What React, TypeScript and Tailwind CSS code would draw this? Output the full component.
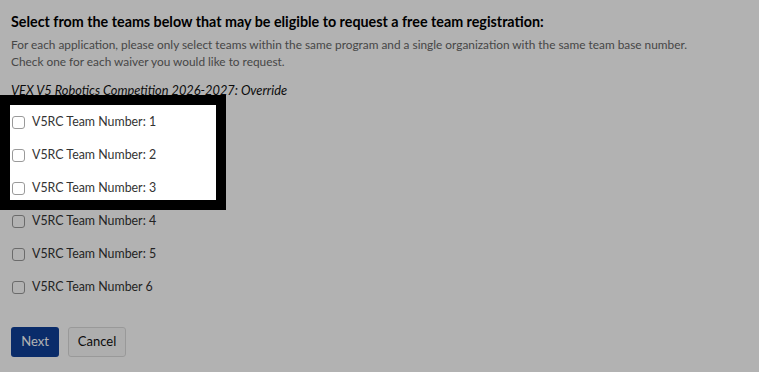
import React from "react";

const teams = [
  "V5RC Team Number: 1",
  "V5RC Team Number: 2",
  "V5RC Team Number: 3",
  "V5RC Team Number: 4",
  "V5RC Team Number: 5",
  "V5RC Team Number 6",
];

export default function App() {
  return (
    <div
      className="relative min-h-[372px] bg-white px-[11px] pt-[12px]"
      style={{ fontFamily: "Lato, 'Noto Sans', sans-serif" }}
    >
      <h2 className="text-[14.3px] font-bold leading-[20px] text-black">
        Select from the teams below that may be eligible to request a free team registration:
      </h2>
      <p className="mt-[4px] text-[11.85px] leading-[17px] text-[#666]">
        For each application, please only select teams within the same program and a single organization with the same team base number.
        <br />
        Check one for each waiver you would like to request.
      </p>
      <p className="mt-[11px] text-[12.8px] italic leading-[18px] text-[#111]">
        VEX V5 Robotics Competition 2026-2027: Override
      </p>

      <div className="mt-[7px] flex flex-col">
        {teams.map((t) => (
          <label key={t} className="flex h-[33px] items-center gap-[7px] text-[12.4px] text-[#333]">
            <span className="ml-[1px] h-[13px] w-[13px] rounded-[3px] border border-[#9a9a9a] bg-white" />
            {t}
          </label>
        ))}
      </div>

      <div className="mt-[23px] flex gap-[9px]">
        <button className="h-[30px] w-[48px] rounded-[3px] bg-[#0f3f99] text-[13px] text-white">
          Next
        </button>
        <button className="h-[30px] w-[58px] rounded-[3px] border border-[#dcdcdc] bg-[#fafafa] text-[13px] text-[#111]">
          Cancel
        </button>
      </div>

      {/* tour spotlight over the first three teams */}
      <div className="pointer-events-none absolute left-0 top-[95px] z-10 h-[115px] w-[226px] border-[10px] border-black shadow-[0_0_0_9999px_rgba(0,0,0,0.3)]" />
    </div>
  );
}
